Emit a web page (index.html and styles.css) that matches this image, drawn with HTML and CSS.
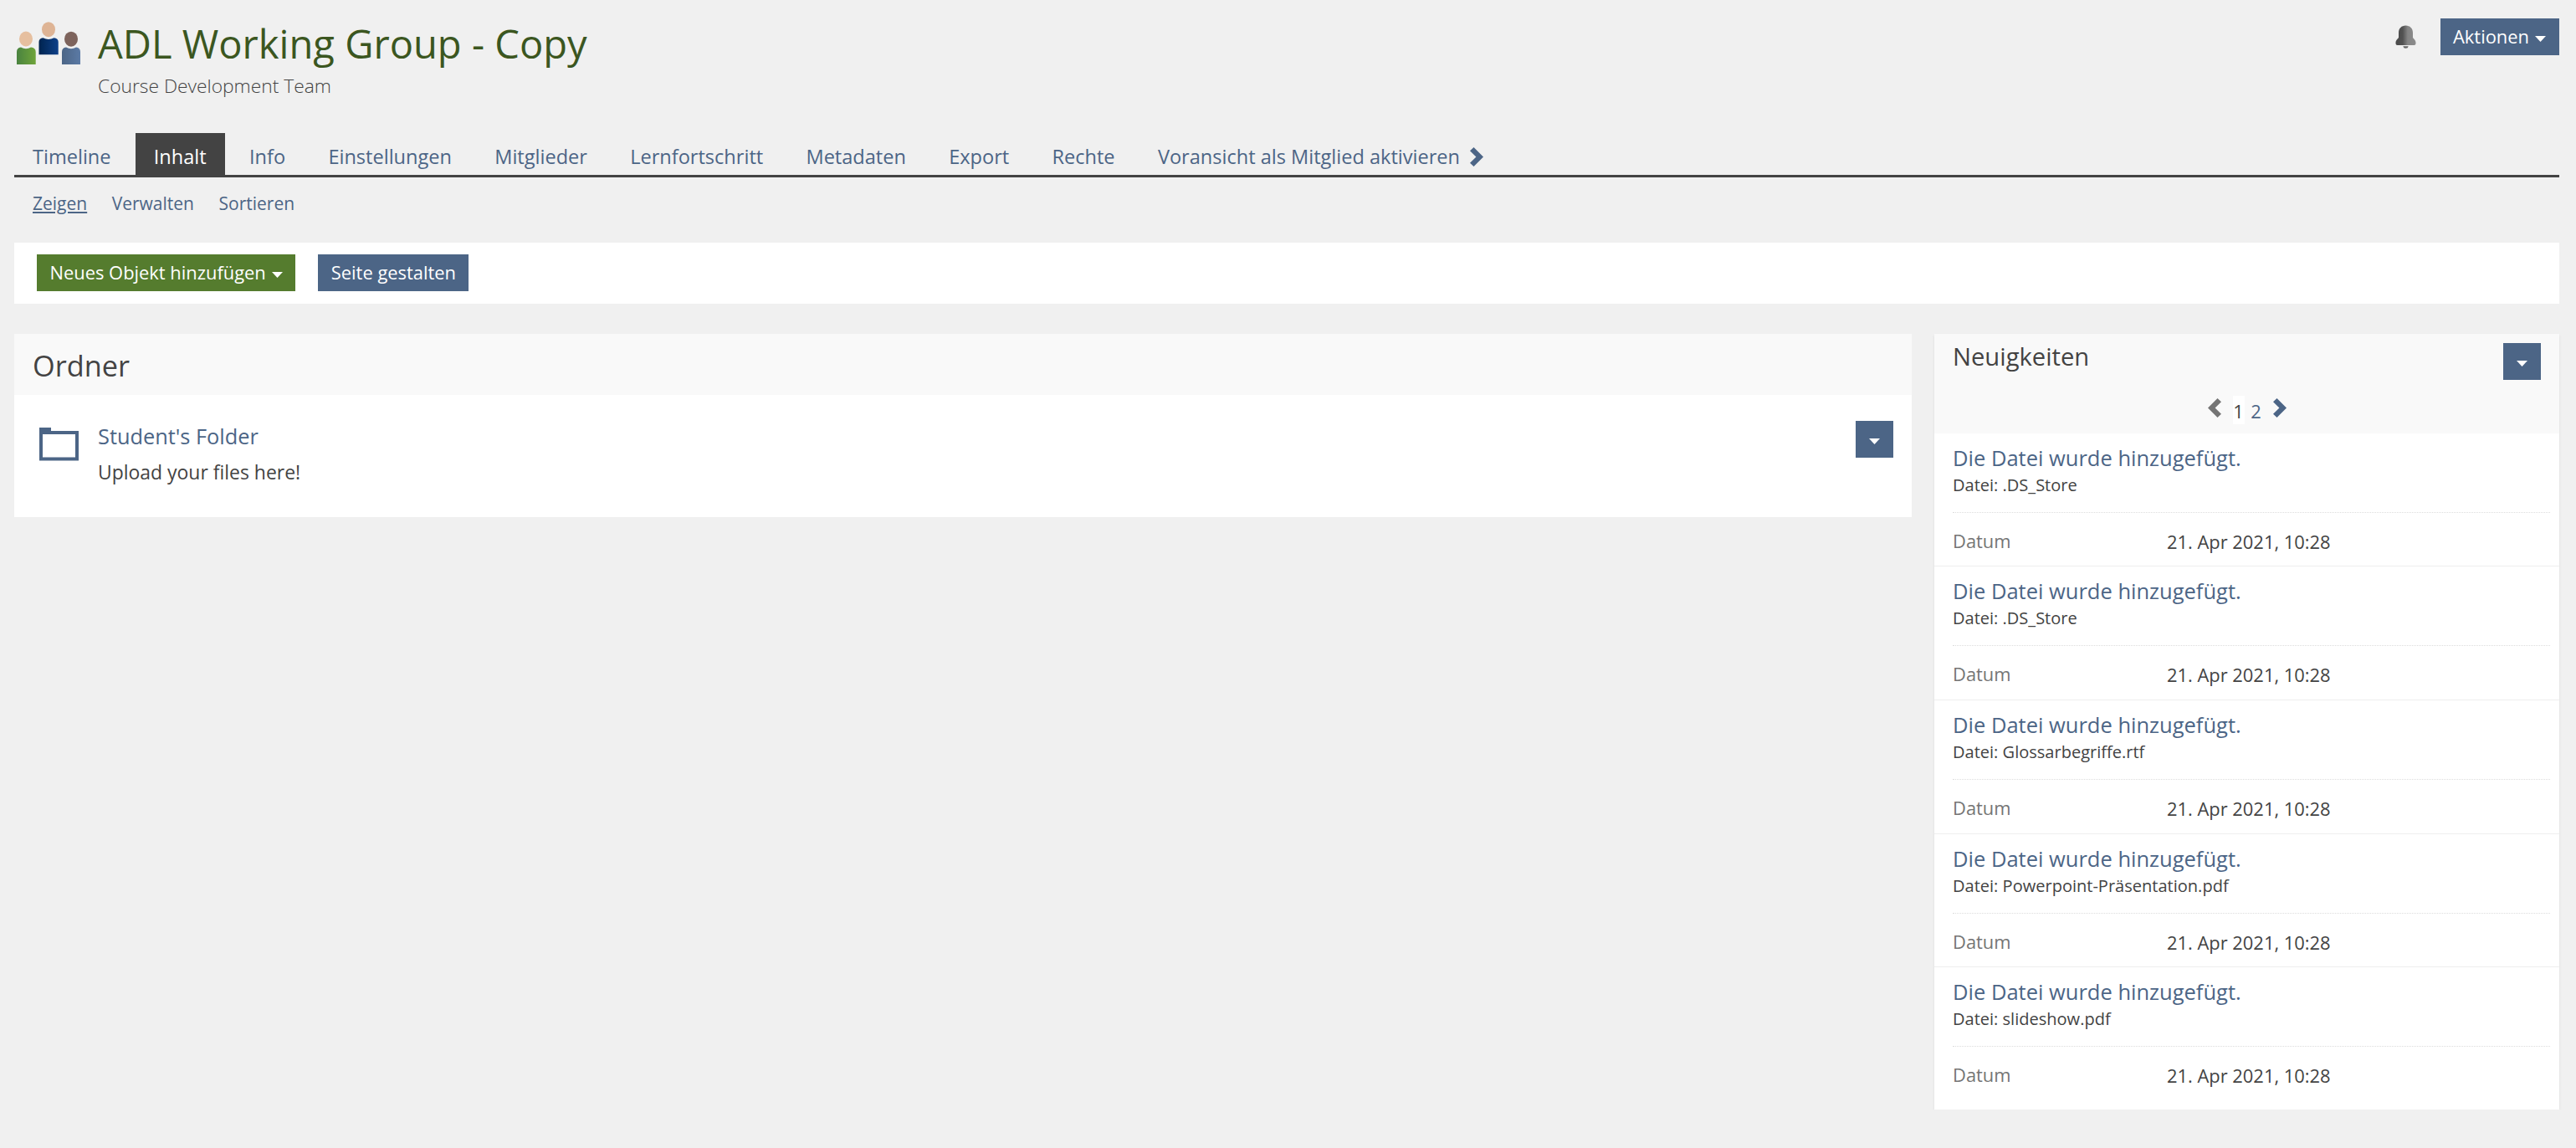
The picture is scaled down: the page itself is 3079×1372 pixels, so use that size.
FILE: index.html
```html
<!DOCTYPE html>
<html lang="de">
<head>
<meta charset="utf-8">
<title>ADL Working Group - Copy</title>
<link rel="stylesheet" href="styles.css">
</head>
<body>
<svg width="0" height="0" class="defs" aria-hidden="true">
  <defs>
    <linearGradient id="green"><stop offset="0" stop-color="#4a8340"/><stop offset="1" stop-color="#6fa43a"/></linearGradient>
    <linearGradient id="navy"><stop offset="0" stop-color="#00244f"/><stop offset="1" stop-color="#0e4089"/></linearGradient>
    <linearGradient id="steel"><stop offset="0" stop-color="#4c6586"/><stop offset="1" stop-color="#5b7aa5"/></linearGradient>
    <linearGradient id="metal"><stop offset="0" stop-color="#4a4a4a"/><stop offset=".35" stop-color="#525252"/><stop offset=".6" stop-color="#858585"/><stop offset="1" stop-color="#8b8b8b"/></linearGradient>
    <symbol id="chevron" viewBox="0 0 16 23"><path d="M4.5 0 16 11.5 4.5 23 0 18.7 7.4 11.5 0 4.3Z" fill="currentColor"/></symbol>
    <symbol id="caret" viewBox="0 0 13 7"><path d="M0 0H13L6.500 7Z" fill="currentColor"/></symbol>
  </defs>
</svg>

<header class="header">
  <svg class="group-icon" viewBox="0 0 80 56">
    <ellipse cx="14" cy="23.500" rx="8" ry="9" fill="#e6bf9f"/>
    <path d="M3 54V39q0-5 5-5.500q6 3.400 12 0q5.700.5 5.700 5.500V54Z" fill="url(#green)"/>
    <ellipse cx="68" cy="23.700" rx="8" ry="9" fill="#7d635c"/>
    <path d="M57 54V39q0-5 5-5.500q6 3.400 12 0q5 .5 5 5.500V54Z" fill="url(#steel)"/>
    <ellipse cx="41" cy="12.200" rx="8" ry="9" fill="#deb495"/>
    <path d="M29.500 42.200V27q0-4 5-4.700q6.500 3.400 13 0q5.200.7 5.200 4.700V42.200Z" fill="url(#navy)"/>
  </svg>
  <div class="heading">
    <h1 class="title">ADL Working Group - Copy</h1>
    <div class="subtitle">Course Development Team</div>
  </div>
  <svg class="bell" viewBox="0 0 25 28">
    <path d="M12.500.5C17.500.5 21 4 21 9v5.500c0 1.500 3.500 3 3.500 6.500v1q0 2-2 2H2.500q-2 0-2-2v-1C.5 17.500 4 16 4 14.500V9C4 4 7.500.5 12.500.5Z" fill="url(#metal)"/>
    <path d="M9.300 25.300h6.400q-.4 2.500-3.200 2.500t-3.200-2.500Z" fill="#666"/>
  </svg>
  <button class="btn">Aktionen <svg class="caret"><use href="#caret"/></svg></button>
</header>

<nav class="tabs">
  <a class="tab">Timeline</a>
  <a class="tab active">Inhalt</a>
  <a class="tab">Info</a>
  <a class="tab">Einstellungen</a>
  <a class="tab">Mitglieder</a>
  <a class="tab">Lernfortschritt</a>
  <a class="tab">Metadaten</a>
  <a class="tab">Export</a>
  <a class="tab">Rechte</a>
  <a class="tab">Voransicht als Mitglied aktivieren <svg class="chevron"><use href="#chevron"/></svg></a>
</nav>
<nav class="subtabs">
  <a class="current">Zeigen</a>
  <a>Verwalten</a>
  <a>Sortieren</a>
</nav>

<div class="toolbar">
  <button class="btn add">Neues Objekt hinzufügen <svg class="caret"><use href="#caret"/></svg></button>
  <button class="btn">Seite gestalten</button>
</div>

<div class="columns">
  <main class="panel">
    <h2 class="panel-title">Ordner</h2>
    <div class="folder-row">
      <svg class="folder" viewBox="0 0 47 40"><path d="M0 0H14V4H47V39.500H0ZM4 8V35.500H43V8Z" fill="#4c6586" fill-rule="evenodd"/></svg>
      <div class="folder-text">
        <a class="folder-name">Student's Folder</a>
        <div class="folder-note">Upload your files here!</div>
      </div>
      <button class="btn square"><svg class="caret"><use href="#caret"/></svg></button>
    </div>
  </main>

  <aside class="panel news">
    <div class="news-head">
      <div class="news-bar">
        <h2 class="news-title">Neuigkeiten</h2>
        <button class="btn square"><svg class="caret"><use href="#caret"/></svg></button>
      </div>
      <div class="pager">
        <svg class="chevron prev"><use href="#chevron"/></svg>
        <span class="page on">1</span>
        <a class="page">2</a>
        <svg class="chevron next"><use href="#chevron"/></svg>
      </div>
    </div>
    <article class="item">
      <a class="item-title">Die Datei wurde hinzugefügt.</a>
      <div class="file">Datei: .DS_Store</div>
      <div class="meta"><span class="label">Datum</span><span>21. Apr 2021, 10:28</span></div>
    </article>
    <article class="item">
      <a class="item-title">Die Datei wurde hinzugefügt.</a>
      <div class="file">Datei: .DS_Store</div>
      <div class="meta"><span class="label">Datum</span><span>21. Apr 2021, 10:28</span></div>
    </article>
    <article class="item">
      <a class="item-title">Die Datei wurde hinzugefügt.</a>
      <div class="file">Datei: Glossarbegriffe.rtf</div>
      <div class="meta"><span class="label">Datum</span><span>21. Apr 2021, 10:28</span></div>
    </article>
    <article class="item">
      <a class="item-title">Die Datei wurde hinzugefügt.</a>
      <div class="file">Datei: Powerpoint-Präsentation.pdf</div>
      <div class="meta"><span class="label">Datum</span><span>21. Apr 2021, 10:28</span></div>
    </article>
    <article class="item">
      <a class="item-title">Die Datei wurde hinzugefügt.</a>
      <div class="file">Datei: slideshow.pdf</div>
      <div class="meta"><span class="label">Datum</span><span>21. Apr 2021, 10:28</span></div>
    </article>
  </aside>
</div>
</body>
</html>
```
FILE: styles.css
```css
* { box-sizing: border-box; }
body {
  margin: 0;
  padding: 20px 20px 0 17px;
  background: #f0f0f0;
  color: #434343;
  font: 21.9px/30px "Open Sans", sans-serif;
}
h1, h2 { margin: 0; font-weight: 400; }
a { color: #4c6586; }
svg { display: block; flex: none; }
.defs { position: absolute; }

.header { display: flex; align-items: flex-start; height: 139px; }
.group-icon { width: 80px; height: 56px; margin-top: 3px; }
.heading { flex: 1; padding-left: 20px; }
.title { color: #3b5620; font-size: 47.1px; line-height: 64px; }
.subtitle { margin-top: 3px; font-size: 22.8px; line-height: 31px; font-weight: 300; }
.bell { width: 25px; height: 28px; margin: 10px 29px 0 0; }

.btn {
  display: flex;
  align-items: center;
  height: 44px;
  padding: 7px 15px;
  border: 0;
  background: #4c6586;
  color: #fff;
  font: inherit;
}
.header .btn { margin-top: 2px; }
.caret { width: 13px; height: 7px; margin: 5px 1px 0 7px; }
.add { background: #557c2e; }
.add, .add + .btn { padding-left: 15.5px; padding-right: 14.5px; }
.square { justify-content: center; width: 45px; padding: 6px 0 8px; }
.square .caret { margin: 7px 0 0; }

.tabs { display: flex; gap: 7.3px; border-bottom: 3px solid #434343; }
.tab {
  display: flex;
  height: 50px;
  padding: 12px 22px 6px;
  font-size: 23.55px;
  line-height: 32px;
}
.active { background: #434343; color: #fff; }
.chevron { width: 16px; height: 23px; }
.tab .chevron { margin: 5px 0 0 12px; }
.subtabs {
  display: flex;
  gap: 29.5px;
  padding: 17px 22px 32px;
  font-size: 21px;
  line-height: 29px;
}
.current { text-decoration: underline; }

.toolbar { display: flex; gap: 27px; height: 73px; padding: 14px 27px; background: #fff; }

.columns {
  display: grid;
  grid-template-columns: 1fr 747px;
  gap: 27px;
  align-items: start;
  margin-top: 36px;
}
.panel { background: #fff; }
.panel-title { padding: 14px 22px 12px; background: #f9f9f9; font-size: 34.3px; line-height: 47px; }
.folder-row { display: flex; align-items: flex-start; padding: 31px 22px 38px 30px; }
.folder { width: 47px; height: 40px; margin-top: 8px; }
.folder-text { flex: 1; padding: 1px 0 0 23px; }
.folder-name { display: block; font-size: 25.35px; line-height: 34px; }
.folder-note { margin-top: 10px; font-size: 22.95px; line-height: 32px; }

.news { box-shadow: 0 2px 3px rgba(0, 0, 0, .09); }
.news-head { height: 118.5px; padding: 7px 22px 0; background: #f9f9f9; }
.news-bar { display: flex; justify-content: space-between; height: 67px; }
.news-bar .btn { margin-top: 4px; }
.news-title { font-size: 29.2px; line-height: 40px; }
.pager { display: flex; justify-content: center; }
.pager .chevron { margin-top: 3px; }
.prev { transform: scaleX(-1); color: #757575; }
.next { color: #4c6586; }
.page { width: 14px; height: 34px; line-height: 37px; text-align: center; }
.on { margin: 0 7px 0 14px; background: #fff; }
.pager .next { margin-left: 13px; }

.item { height: 159.7px; padding: 12px 11px 0 22px; border-bottom: 1px solid #eee; }
.item:last-child { height: 169.8px; border: 0; }
.item-title { display: block; font-size: 25.5px; line-height: 35px; }
.file { height: 47px; padding-top: 1px; font-size: 20.05px; line-height: 28px; }
.meta { display: flex; padding-top: 20px; border-top: 1px dotted #ddd; }
.label { width: 256px; margin-top: -1px; color: #757575; }
```
